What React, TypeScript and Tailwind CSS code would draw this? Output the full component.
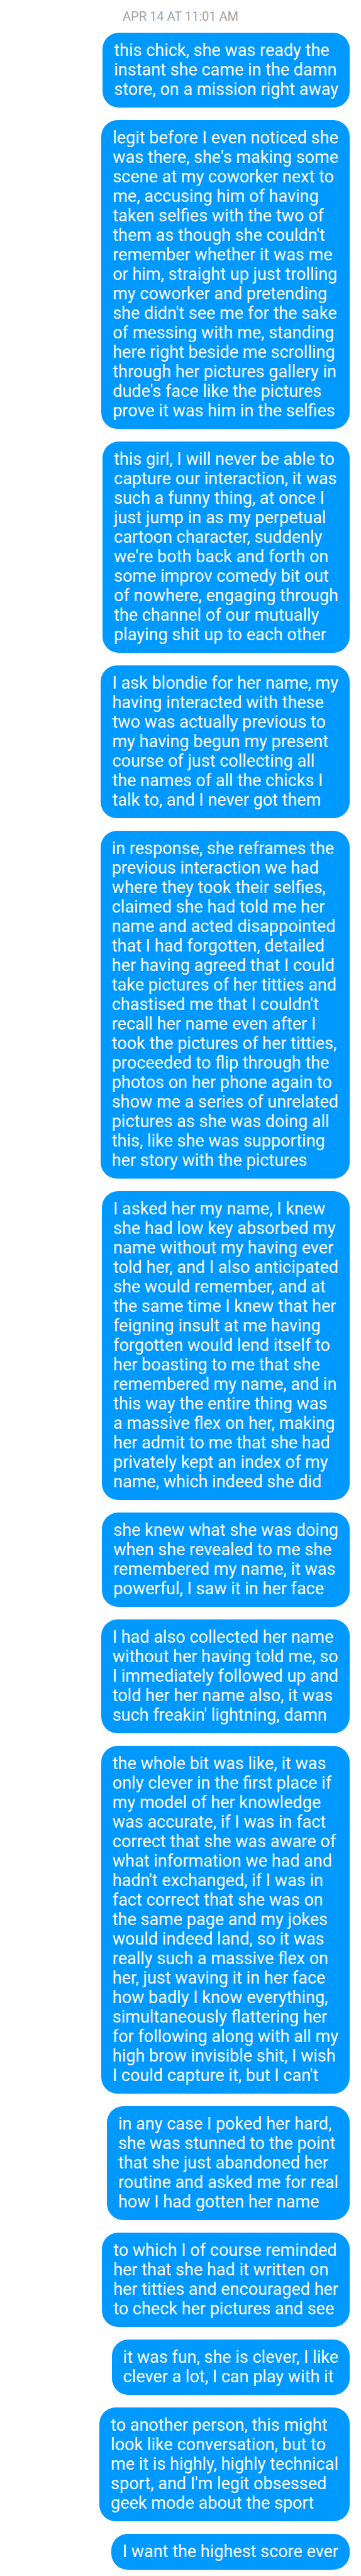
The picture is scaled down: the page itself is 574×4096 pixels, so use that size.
const messages: string[] = [
  `this chick, she was ready the
instant she came in the damn
store, on a mission right away`,
  `legit before I even noticed she
was there, she's making some
scene at my coworker next to
me, accusing him of having
taken selfies with the two of
them as though she couldn't
remember whether it was me
or him, straight up just trolling
my coworker and pretending
she didn't see me for the sake
of messing with me, standing
here right beside me scrolling
through her pictures gallery in
dude's face like the pictures
prove it was him in the selfies`,
  `this girl, I will never be able to
capture our interaction, it was
such a funny thing, at once I
just jump in as my perpetual
cartoon character, suddenly
we're both back and forth on
some improv comedy bit out
of nowhere, engaging through
the channel of our mutually
playing shit up to each other`,
  `I ask blondie for her name, my
having interacted with these
two was actually previous to
my having begun my present
course of just collecting all
the names of all the chicks I
talk to, and I never got them`,
  `in response, she reframes the
previous interaction we had
where they took their selfies,
claimed she had told me her
name and acted disappointed
that I had forgotten, detailed
her having agreed that I could
take pictures of her titties and
chastised me that I couldn't
recall her name even after I
took the pictures of her titties,
proceeded to flip through the
photos on her phone again to
show me a series of unrelated
pictures as she was doing all
this, like she was supporting
her story with the pictures`,
  `I asked her my name, I knew
she had low key absorbed my
name without my having ever
told her, and I also anticipated
she would remember, and at
the same time I knew that her
feigning insult at me having
forgotten would lend itself to
her boasting to me that she
remembered my name, and in
this way the entire thing was
a massive flex on her, making
her admit to me that she had
privately kept an index of my
name, which indeed she did`,
  `she knew what she was doing
when she revealed to me she
remembered my name, it was
powerful, I saw it in her face`,
  `I had also collected her name
without her having told me, so
I immediately followed up and
told her her name also, it was
such freakin' lightning, damn`,
  `the whole bit was like, it was
only clever in the first place if
my model of her knowledge
was accurate, if I was in fact
correct that she was aware of
what information we had and
hadn't exchanged, if I was in
fact correct that she was on
the same page and my jokes
would indeed land, so it was
really such a massive flex on
her, just waving it in her face
how badly I know everything,
simultaneously flattering her
for following along with all my
high brow invisible shit, I wish
I could capture it, but I can't`,
  `in any case I poked her hard,
she was stunned to the point
that she just abandoned her
routine and asked me for real
how I had gotten her name`,
  `to which I of course reminded
her that she had it written on
her titties and encouraged her
to check her pictures and see`,
  `it was fun, she is clever, I like
clever a lot, I can play with it`,
  `to another person, this might
look like conversation, but to
me it is highly, highly technical
sport, and I'm legit obsessed
geek mode about the sport`,
  `I want the highest score ever`,
];

function Bubble({ text }: { text: string }) {
  return (
    <li className="rounded-[26px] bg-[#0099ff] px-[18px] py-[13px] text-[27px] leading-[31px] whitespace-pre text-white">
      {text}
    </li>
  );
}

export default function App() {
  return (
    <main className="min-h-screen bg-white px-[18px] pt-3 pb-3 font-['Roboto',sans-serif]">
      <time className="block text-center text-[20px] leading-[28px] text-[#a3a3a3]">
        APR 14 AT 11:01 AM
      </time>
      <ol className="mt-3 flex flex-col items-end gap-5">
        {messages.map((text) => (
          <Bubble key={text} text={text} />
        ))}
      </ol>
    </main>
  );
}
